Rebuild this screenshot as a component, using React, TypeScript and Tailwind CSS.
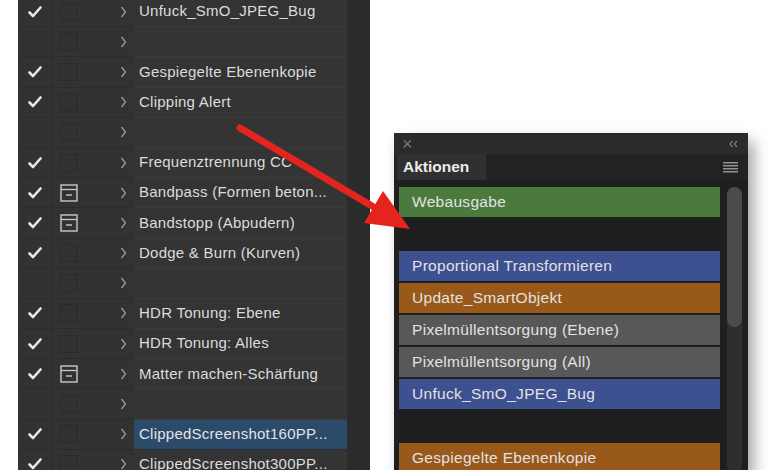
import { ReactNode } from 'react'

type LeftRow = { check: boolean; dialog?: boolean; text: string; selected?: boolean }

const leftRows: LeftRow[] = [
  { check: true, text: 'Unfuck_SmO_JPEG_Bug' },
  { check: false, text: '' },
  { check: true, text: 'Gespiegelte Ebenenkopie' },
  { check: true, text: 'Clipping Alert' },
  { check: false, text: '' },
  { check: true, text: 'Frequenztrennung CC' },
  { check: true, dialog: true, text: 'Bandpass (Formen beton...' },
  { check: true, dialog: true, text: 'Bandstopp (Abpudern)' },
  { check: true, text: 'Dodge & Burn (Kurven)' },
  { check: false, text: '' },
  { check: true, text: 'HDR Tonung: Ebene' },
  { check: true, text: 'HDR Tonung: Alles' },
  { check: true, dialog: true, text: 'Matter machen-Schärfung' },
  { check: false, text: '' },
  { check: true, text: 'ClippedScreenshot160PP...', selected: true },
  { check: true, text: 'ClippedScreenshot300PP...' },
]

const actions = [
  { text: 'Webausgabe', color: 'bg-[#4a7a3c]' },
  { text: '', color: 'bg-[#1e1e1e]' },
  { text: 'Proportional Transformieren', color: 'bg-[#3d5090]' },
  { text: 'Update_SmartObjekt', color: 'bg-[#98591a]' },
  { text: 'Pixelmüllentsorgung (Ebene)', color: 'bg-[#585858]' },
  { text: 'Pixelmüllentsorgung (All)', color: 'bg-[#585858]' },
  { text: 'Unfuck_SmO_JPEG_Bug', color: 'bg-[#3d5090]' },
  { text: '', color: 'bg-[#1e1e1e]' },
  { text: 'Gespiegelte Ebenenkopie', color: 'bg-[#98591a]' },
]

function Check() {
  return (
    <svg width="14" height="12" viewBox="0 0 14 12">
      <path d="M1.5 6.5 L5 10 L12.5 1.5" fill="none" stroke="#e8e8e8" strokeWidth="2.6" strokeLinecap="round" strokeLinejoin="round" />
    </svg>
  )
}

function DialogBox({ on }: { on?: boolean }) {
  if (!on) return <div className="h-[18px] w-[18px] border border-[#2a2a2a] bg-[#313131]" />
  return (
    <svg width="18" height="18" viewBox="0 0 18 18">
      <rect x="1" y="1" width="16" height="16" fill="none" stroke="#c8c8c8" strokeWidth="1.4" />
      <line x1="1" y1="5.5" x2="17" y2="5.5" stroke="#c8c8c8" strokeWidth="1.3" />
      <line x1="6" y1="11" x2="12" y2="11" stroke="#c8c8c8" strokeWidth="1.4" />
    </svg>
  )
}

function Chevron() {
  return (
    <svg width="7" height="12" viewBox="0 0 7 12">
      <path d="M1.5 1 L5.5 6 L1.5 11" fill="none" stroke="#9a9a9a" strokeWidth="1.3" />
    </svg>
  )
}

function LeftPanel() {
  return (
    <div className="-mt-[3px] ml-[18px] flex w-[352px] flex-col self-start bg-[#323232]">
      {leftRows.map((row, i) => (
        <div key={i} className="flex h-[30.2px] shrink-0">
          <div className="flex w-[34px] items-center justify-center border-r border-b border-[#2c2c2c]">
            {row.check && <Check />}
          </div>
          <div className="flex w-[36px] items-center border-b border-[#2c2c2c] pl-[8px]">
            <DialogBox on={row.dialog} />
          </div>
          <div className="flex w-[46px] items-center border-b border-[#2c2c2c] pl-[32px]">
            <Chevron />
          </div>
          <div
            className={
              row.selected
                ? 'flex w-[213px] items-center border-b border-[#2c2c2c] bg-[#2c4a6a] pl-[5px] text-[15px] tracking-[0.25px] text-[#e4e4e4]'
                : 'flex w-[213px] items-center border-b border-[#3a3a3a] bg-[#343434] pl-[5px] text-[15px] tracking-[0.25px] text-[#dcdcdc]'
            }
          >
            <span className="whitespace-nowrap">{row.text}</span>
          </div>
          <div className="w-[23px] bg-[#2b2b2b]" />
        </div>
      ))}
    </div>
  )
}

function Hamburger() {
  return (
    <svg width="15" height="11" viewBox="0 0 15 11">
      {[0.75, 3.75, 6.75, 9.75].map((y) => (
        <line key={y} x1="0" y1={y} x2="15" y2={y} stroke="#9a9a9a" strokeWidth="1.4" />
      ))}
    </svg>
  )
}

function Collapse() {
  return (
    <svg width="9" height="8" viewBox="0 0 9 8">
      <path d="M3.5 1 L1 4 L3.5 7 M8 1 L5.5 4 L8 7" fill="none" stroke="#7a7a7a" strokeWidth="1.3" />
    </svg>
  )
}

function ActionsPanel({ children }: { children?: ReactNode }) {
  return (
    <div className="ml-[24px] mt-[133px] flex w-[354px] flex-col self-start bg-[#1f1f1f] shadow-[6px_8px_14px_rgba(0,0,0,0.35)]">
      <div className="flex h-[21px] items-center justify-between bg-[#2b2b2b] pl-[8px] pr-[10px]">
        <span className="text-[18px] leading-none text-[#7a7a7a]">×</span>
        <Collapse />
      </div>
      <div className="flex h-[26px] items-stretch justify-between bg-[#232323] pr-[10px]">
        <div className="ml-[3px] flex w-[89px] items-center bg-[#303030] pl-[6px] text-[15.5px] font-bold text-[#ececec]">
          Aktionen
        </div>
        <div className="flex items-center">
          <Hamburger />
        </div>
      </div>
      <div className="flex pl-[5px] pt-[7px]">
        <div className="flex w-[321px] flex-col gap-[2px]">
          {actions.map((a, i) => (
            <div key={i} className={`flex h-[30px] items-center pl-[13px] text-[15.5px] tracking-[0.3px] text-[#e2e2e2] ${a.color}`}>
              <span className="whitespace-nowrap">{a.text}</span>
            </div>
          ))}
        </div>
        <div className="ml-[7px] w-[15px] rounded-full bg-[#2e2e2e]">
          <div className="h-[140px] w-full rounded-full bg-[#4b4b4b]" />
        </div>
      </div>
      {children}
    </div>
  )
}

function Arrow() {
  return (
    <svg className="pointer-events-none absolute left-0 top-0" width="780" height="470" viewBox="0 0 780 470">
      <line x1="240" y1="128" x2="372" y2="206" stroke="#e4241e" strokeWidth="7" strokeLinecap="round" />
      <polygon points="410,229 364,223 383,191" fill="#e4241e" />
    </svg>
  )
}

export default function App() {
  return (
    <div className="relative flex h-[470px] w-[780px] overflow-hidden bg-white font-['Liberation_Sans',Arial,sans-serif]">
      <LeftPanel />
      <ActionsPanel />
      <Arrow />
    </div>
  )
}
